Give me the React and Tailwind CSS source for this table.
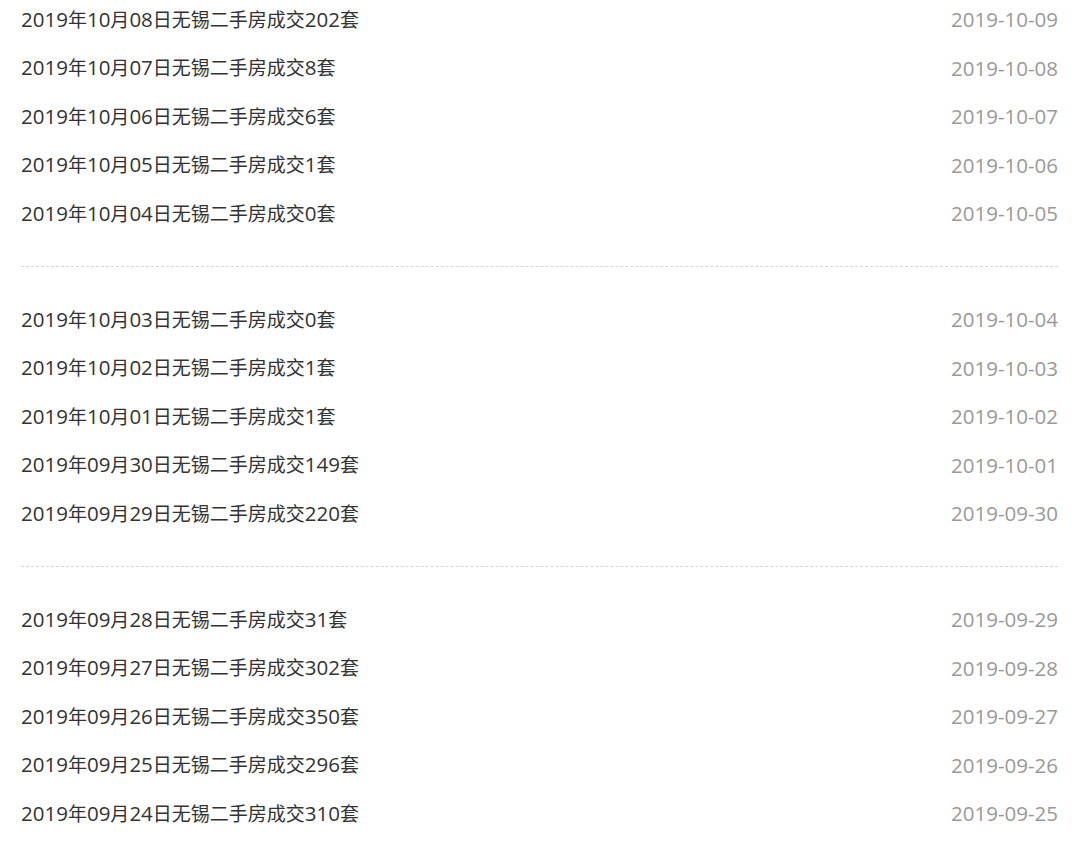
import React from "react";

const groups = [
  [
    ["2019年10月08日无锡二手房成交202套", "2019-10-09"],
    ["2019年10月07日无锡二手房成交8套", "2019-10-08"],
    ["2019年10月06日无锡二手房成交6套", "2019-10-07"],
    ["2019年10月05日无锡二手房成交1套", "2019-10-06"],
    ["2019年10月04日无锡二手房成交0套", "2019-10-05"],
  ],
  [
    ["2019年10月03日无锡二手房成交0套", "2019-10-04"],
    ["2019年10月02日无锡二手房成交1套", "2019-10-03"],
    ["2019年10月01日无锡二手房成交1套", "2019-10-02"],
    ["2019年09月30日无锡二手房成交149套", "2019-10-01"],
    ["2019年09月29日无锡二手房成交220套", "2019-09-30"],
  ],
  [
    ["2019年09月28日无锡二手房成交31套", "2019-09-29"],
    ["2019年09月27日无锡二手房成交302套", "2019-09-28"],
    ["2019年09月26日无锡二手房成交350套", "2019-09-27"],
    ["2019年09月25日无锡二手房成交296套", "2019-09-26"],
    ["2019年09月24日无锡二手房成交310套", "2019-09-25"],
  ],
];

function Mixed({ text }) {
  const parts = text.split(/([0-9\-]+)/).filter(Boolean);
  return parts.map((p, i) =>
    /^[0-9\-]+$/.test(p) ? (
      <span key={i} className="text-[20.5px]">{p}</span>
    ) : (
      <span key={i}>{p}</span>
    )
  );
}

export default function App() {
  return (
    <div
      className="w-[1080px] h-[842px] overflow-hidden bg-white pl-[21px] pr-[22px]"
      style={{ fontFamily: '"Open Sans", "Noto Sans CJK SC", sans-serif' }}
    >
      <div className="-mt-[5px]">
        {groups.map((g, gi) => (
          <div key={gi}>
            <ul>
              {g.map(([t, d]) => (
                <li key={t} className="h-[48.5px] flex items-center justify-between">
                  <span className="text-[19px] leading-[28px] text-[#333]">
                    <Mixed text={t} />
                  </span>
                  <span className="text-[20.5px] leading-[28px] text-[#999]">{d}</span>
                </li>
              ))}
            </ul>
            {gi < groups.length - 1 && (
              <div className="pt-[28px] pb-[28.5px]">
                <div className="border-t border-dashed border-[#d6d6d6]" />
              </div>
            )}
          </div>
        ))}
      </div>
    </div>
  );
}
